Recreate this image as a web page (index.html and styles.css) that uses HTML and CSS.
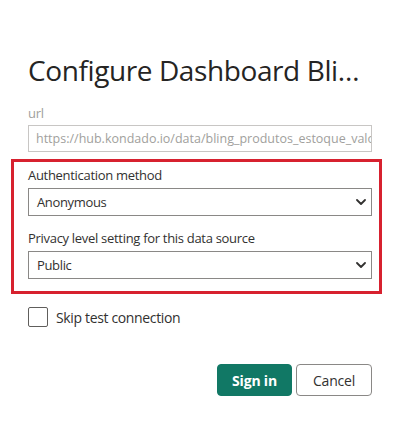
FILE: index.html
```html
<!DOCTYPE html>
<html>
<head>
<meta charset="utf-8">
<link rel="stylesheet" href="styles.css">
</head>
<body>
<div class="dialog">
  <h1 class="title">Configure Dashboard Bling Produtos Estoque</h1>
  <div class="label muted">url</div>
  <div class="input">https://hub.kondado.io/data/bling_produtos_estoque_valor</div>
  <div class="highlight">
    <div class="label">Authentication method</div>
    <div class="select">
      <span>Anonymous</span>
      <svg class="chev" width="10" height="6" viewBox="0 0 10 6"><path d="M1 1 L5 5 L9 1" fill="none" stroke="#323130" stroke-width="1.8" stroke-linecap="round" stroke-linejoin="round"/></svg>
    </div>
    <div class="label second">Privacy level setting for this data source</div>
    <div class="select">
      <span>Public</span>
      <svg class="chev" width="10" height="6" viewBox="0 0 10 6"><path d="M1 1 L5 5 L9 1" fill="none" stroke="#323130" stroke-width="1.8" stroke-linecap="round" stroke-linejoin="round"/></svg>
    </div>
  </div>
  <label class="check">
    <span class="box"></span>
    <span>Skip test connection</span>
  </label>
  <div class="actions">
    <button class="btn primary">Sign in</button>
    <button class="btn secondary">Cancel</button>
  </div>
</div>
</body>
</html>
```
FILE: styles.css
```css
html, body {
  margin: 0;
  padding: 0;
  background: #ffffff;
}
body {
  font-family: "Open Sans", "Noto Sans", sans-serif;
  color: #323130;
}
* {
  box-sizing: border-box;
}
.dialog {
  width: 400px;
  padding: 52px 28px 0 28px;
}
.title {
  margin: 0;
  font-size: 28px;
  font-weight: 400;
  line-height: 36px;
  letter-spacing: -0.4px;
  color: #252423;
  white-space: nowrap;
  overflow: hidden;
  text-overflow: ellipsis;
  width: 340px;
}
.label {
  font-size: 13px;
  line-height: 18px;
  letter-spacing: -0.3px;
  color: #323130;
}
.label.muted {
  margin-top: 16px;
  color: #a19f9d;
}
.input {
  margin-top: 3px;
  height: 27px;
  border: 1px solid #c8c6c4;
  padding: 0 7px;
  font-size: 12.5px;
  line-height: 25px;
  color: #a19f9d;
  white-space: nowrap;
  overflow: hidden;
}
.highlight {
  margin: 7px -10px 0 -17px;
  border: 3px solid #d7212f;
  padding: 4px 7px 12px 14px;
}
.select {
  margin-top: 4px;
  height: 28px;
  border: 1px solid #8a8886;
  display: flex;
  align-items: center;
  justify-content: space-between;
  padding: 0 5px 0 8px;
  font-size: 13px;
  letter-spacing: -0.35px;
  color: #323130;
}
.label.second {
  margin-top: 13px;
}
.chev {
  display: block;
}
.check {
  margin-top: 13px;
  display: flex;
  align-items: center;
  gap: 8px;
  font-size: 14px;
  letter-spacing: -0.35px;
  color: #323130;
}
.box {
  width: 20px;
  height: 20px;
  border: 1px solid #605e5c;
  border-radius: 2px;
}
.actions {
  margin-top: 37px;
  display: flex;
  justify-content: flex-end;
  gap: 4px;
}
.btn {
  height: 32px;
  border-radius: 4px;
  font-family: "Open Sans", "Noto Sans", sans-serif;
  font-size: 14px;
  font-weight: 700;
  padding: 0;
  white-space: nowrap;
  letter-spacing: -0.2px;
}
.primary {
  width: 75px;
  background: #117865;
  border: 1px solid #117865;
  color: #ffffff;
}
.secondary {
  width: 76px;
  background: #ffffff;
  border: 1px solid #8a8886;
  color: #323130;
  font-weight: 400;
}
```
